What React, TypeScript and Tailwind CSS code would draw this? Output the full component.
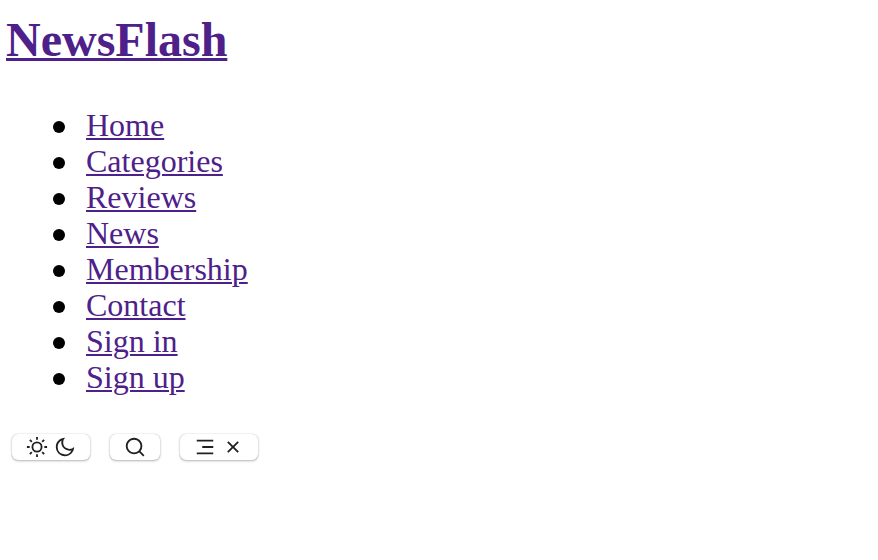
import React from "react";

const links = ["Home", "Categories", "Reviews", "News", "Membership", "Contact", "Sign in", "Sign up"];

const icons = {
  sun: "M12 18a6 6 0 1 1 0-12 6 6 0 0 1 0 12zm0-2a4 4 0 1 0 0-8 4 4 0 0 0 0 8zM11 1h2v3h-2V1zm0 19h2v3h-2v-3zM3.515 4.929l1.414-1.414L7.05 5.636 5.636 7.05 3.515 4.93zM16.95 18.364l1.414-1.414 2.121 2.121-1.414 1.414-2.121-2.121zm2.121-14.85l1.414 1.415-2.121 2.121-1.414-1.414 2.121-2.121zM5.636 16.95l1.414 1.414-2.121 2.121-1.414-1.414 2.121-2.121zM23 11v2h-3v-2h3zM4 11v2H1v-2h3z",
  moon: "M10 7a7 7 0 0 0 12 4.9v.1c0 5.523-4.477 10-10 10S2 17.523 2 12 6.477 2 12 2h.1A6.979 6.979 0 0 0 10 7zm-6 5a8 8 0 0 0 15.062 3.762A9 9 0 0 1 8.238 4.938 7.999 7.999 0 0 0 4 12z",
  search:
    "M18.031 16.617l4.283 4.282-1.415 1.415-4.282-4.283A8.96 8.96 0 0 1 11 20c-4.968 0-9-4.032-9-9s4.032-9 9-9 9 4.032 9 9a8.96 8.96 0 0 1-1.969 5.617zm-2.006-.742A6.977 6.977 0 0 0 18 11c0-3.868-3.133-7-7-7-3.868 0-7 3.132-7 7 0 3.867 3.132 7 7 7a6.977 6.977 0 0 0 4.875-1.975l.15-.15z",
  menu: "M3 4h18v2H3V4zm6 7h12v2H9v-2zm-6 7h18v2H3v-2z",
  close:
    "M12 10.586l4.95-4.95 1.414 1.414-4.95 4.95 4.95 4.95-1.414 1.414-4.95-4.95-4.95 4.95-1.414-1.414 4.95-4.95-4.95-4.95L7.05 5.636z",
};

function Icon({ name }: { name: keyof typeof icons }) {
  return (
    <svg className="size-[22px] shrink-0" viewBox="0 0 24 24" fill="#202020" aria-hidden="true">
      <path d={icons[name]} />
    </svg>
  );
}

function ToolButton({ label, names, width }: { label: string; names: (keyof typeof icons)[]; width: string }) {
  return (
    <button
      aria-label={label}
      className={`flex h-[26px] items-center justify-center gap-1.5 rounded-[6px] bg-white shadow-[0_0_1px_rgba(0,0,0,0.3),0_1px_2.5px_rgba(0,0,0,0.28)] ${width}`}
    >
      {names.map((name) => (
        <Icon key={name} name={name} />
      ))}
    </button>
  );
}

export default function App() {
  return (
    <div className="h-[560px] w-[878px] overflow-hidden bg-white pl-[6px] pt-[13px] font-['Liberation_Serif',serif] text-[32px] leading-[36px] text-black">
      <h1 className="text-[48px] font-bold leading-[54px]">
        <a className="text-[#4e2089] underline decoration-[3px] underline-offset-[2px]">NewsFlash</a>
      </h1>
      <ul className="mt-[40px]">
        {links.map((label) => (
          <li key={label} className="flex items-center pl-[47px]">
            <span className="mr-[21px] mt-[3px] size-3 shrink-0 rounded-full bg-black" />
            <a className="text-[#4e2089] underline decoration-[2px] underline-offset-[2px]">{label}</a>
          </li>
        ))}
      </ul>
      <div className="ml-[6px] mt-[39px] flex gap-5">
        <ToolButton label="Toggle theme" names={["sun", "moon"]} width="w-[78px]" />
        <ToolButton label="Search" names={["search"]} width="w-[50px]" />
        <ToolButton label="Toggle menu" names={["menu", "close"]} width="w-[78px]" />
      </div>
    </div>
  );
}
